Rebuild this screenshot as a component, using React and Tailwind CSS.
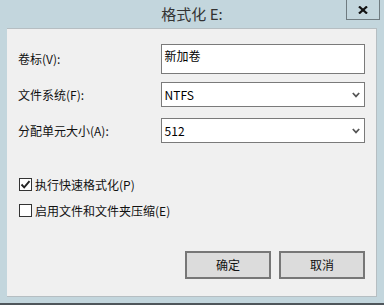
import React from "react";

const font = { fontFamily: '"Noto Sans CJK SC", "Noto Sans", sans-serif' };

function Chevron() {
  return (
    <svg width="8" height="6" viewBox="0 0 8 6" className="shrink-0">
      <polyline points="0.8,1 4,4.4 7.2,1" fill="none" stroke="#555" strokeWidth="1.7" />
    </svg>
  );
}

function Select({ value, mt }) {
  return (
    <div className={`h-[25px] w-[205px] border border-[#7a7a7a] bg-white flex items-center justify-between pl-[3px] pr-[4px] ${mt}`}>
      <span className="text-[12px] leading-none text-black">{value}</span>
      <Chevron />
    </div>
  );
}

function Check({ checked, label, mt }) {
  return (
    <div className={`flex items-center h-[13px] ${mt}`}>
      <div className="w-[13px] h-[13px] border border-[#333] bg-white flex items-center justify-center shrink-0">
        {checked && (
          <svg width="11" height="11" viewBox="0 0 11 11">
            <polyline points="1.5,5.5 4.2,8.3 9.5,2.2" fill="none" stroke="#222" strokeWidth="1.9" />
          </svg>
        )}
      </div>
      <span className="ml-[3px] text-[12px] leading-none text-[#111]">{label}</span>
    </div>
  );
}

export default function App() {
  return (
    <div className="w-[384px] h-[305px] bg-[#c3d6dd] flex flex-col overflow-hidden" style={font}>
      <div className="relative h-[28px] flex items-start justify-center shrink-0">
        <span className="mt-[5px] text-[15px] leading-[18px] text-[#333]">格式化 E:</span>
        <div className="absolute right-[4px] top-[-1px] w-[34px] h-[21px] border border-[#6f7b80] flex items-center justify-center">
          <svg width="10" height="8" viewBox="0 0 10 8">
            <line x1="1" y1="0.5" x2="9" y2="7.5" stroke="#111" strokeWidth="2.2" />
            <line x1="9" y1="0.5" x2="1" y2="7.5" stroke="#111" strokeWidth="2.2" />
          </svg>
        </div>
      </div>
      <div className="mx-[7px] h-[269px] bg-[#f0f0f0] border-t border-b border-r border-[#b6bec2] pt-[15px] pl-[11px] pr-[11px] flex flex-col shrink-0">
        <div className="flex items-center h-[30px]">
          <span className="w-[143px] text-[12px] leading-none text-[#111]">卷标(V):</span>
          <div className="h-[30px] w-[205px] border border-[#7a7a7a] bg-white pl-[3px] pt-[4px] text-[12px] leading-[14px] text-black">
            新加卷
          </div>
        </div>
        <div className="flex items-center mt-[8px]">
          <span className="w-[143px] text-[12px] leading-none text-[#111]">文件系统(F):</span>
          <Select value="NTFS" />
        </div>
        <div className="flex items-center mt-[11px]">
          <span className="w-[143px] text-[12px] leading-none text-[#111]">分配单元大小(A):</span>
          <Select value="512" />
        </div>
        <div className="pl-[1px]">
          <Check checked label="执行快速格式化(P)" mt="mt-[35px]" />
          <Check label="启用文件和文件夹压缩(E)" mt="mt-[13px]" />
        </div>
        <div className="flex justify-end gap-[8px] mt-[34px]">
          <button className="w-[86px] h-[28px] bg-[#dcdcdc] border-2 border-[#777] text-[12px] text-[#111] flex items-center justify-center">确定</button>
          <button className="w-[86px] h-[28px] bg-[#dcdcdc] border-2 border-[#777] text-[12px] text-[#111] flex items-center justify-center">取消</button>
        </div>
      </div>
      <div className="h-[6px] shrink-0" />
      <div className="flex-1 bg-[#4f565b]" />
    </div>
  );
}
